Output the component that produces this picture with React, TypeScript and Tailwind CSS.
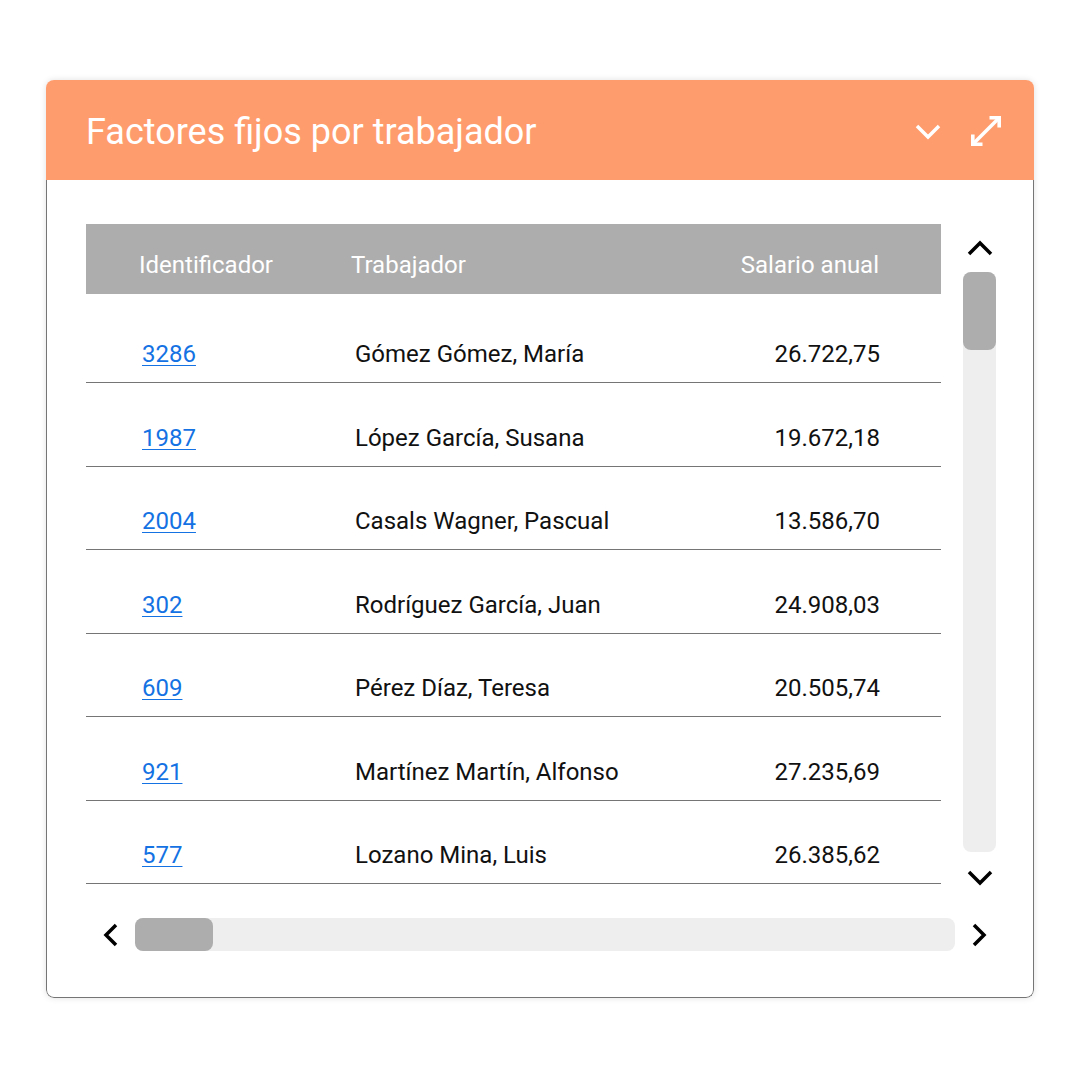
import React from "react";

const rows = [
  { id: "3286", name: "Gómez Gómez, María", salary: "26.722,75" },
  { id: "1987", name: "López García, Susana", salary: "19.672,18" },
  { id: "2004", name: "Casals Wagner, Pascual", salary: "13.586,70" },
  { id: "302", name: "Rodríguez García, Juan", salary: "24.908,03" },
  { id: "609", name: "Pérez Díaz, Teresa", salary: "20.505,74" },
  { id: "921", name: "Martínez Martín, Alfonso", salary: "27.235,69" },
  { id: "577", name: "Lozano Mina, Luis", salary: "26.385,62" },
];

function Chevron({ dir, color = "#000" }: { dir: "up" | "down" | "left" | "right"; color?: string }) {
  const pts: Record<string, string> = {
    up: "2,13 13,2 24,13",
    down: "2,2 13,13 24,2",
    left: "12,2 2,12 12,22",
    right: "2,2 12,12 2,22",
  };
  const horiz = dir === "left" || dir === "right";
  return (
    <svg
      width={horiz ? 14 : 26}
      height={horiz ? 24 : 15}
      viewBox={horiz ? "0 0 14 24" : "0 0 26 15"}
      fill="none"
      stroke={color}
      strokeWidth={3.5}
      overflow="visible"
    >
      <polyline points={pts[dir]} />
    </svg>
  );
}

function Expand() {
  return (
    <svg width="34" height="34" viewBox="0 0 34 34" fill="none" stroke="#fff" strokeWidth="3.6" strokeLinejoin="miter">
      <polyline points="20.5 3.8 30.2 3.8 30.2 13.5" />
      <polyline points="13.5 30.2 3.8 30.2 3.8 20.5" />
      <line x1="30" y1="4" x2="4" y2="30" />
    </svg>
  );
}

export default function App() {
  return (
    <div className="w-full h-[1080px] bg-white pt-[80px] pl-[46px]" style={{ fontFamily: "Roboto, 'Noto Sans', sans-serif" }}>
      <div className="w-[988px] h-[918px] rounded-[8px] overflow-hidden shadow-[0_0_6px_rgba(0,0,0,0.12)] flex flex-col">
        <div className="h-[100px] bg-[#ff9c6e] flex items-center pl-[40px] pr-[31px]">
          <div className="text-white text-[36px] flex-1 leading-none pt-[3px]">Factores fijos por trabajador</div>
          <div className="flex items-center gap-[28px] pt-[2px]">
            <Chevron dir="down" color="#fff" />
            <Expand />
          </div>
        </div>
        <div className="flex-1 border-x border-b border-[#757575] rounded-b-[8px] pl-[39px] pt-[44px] flex flex-col">
          <div className="flex h-[660px] items-start">
            <div className="w-[855px] flex flex-col">
              <div className="h-[70px] bg-[#adadad] flex items-end pb-[15px] text-white text-[24px] leading-[28px]">
                <div className="w-[265px] pl-[53px]">Identificador</div>
                <div className="flex-1">Trabajador</div>
                <div className="pr-[62px]">Salario anual</div>
              </div>
              <div className="h-[5.5px]" />
              {rows.map((r) => (
                <div key={r.id} className="h-[83.5px] border-b border-[#757575] flex items-end pb-[14px] text-[24px] leading-[28px] text-[#111]">
                  <div className="w-[269px] pl-[56px]">
                    <span className="text-[#1472e3] underline underline-offset-[3px] decoration-[1px]">{r.id}</span>
                  </div>
                  <div className="flex-1">{r.name}</div>
                  <div className="pr-[61px]">{r.salary}</div>
                </div>
              ))}
            </div>
            <div className="ml-[22px] w-[33px] flex flex-col items-center">
              <div className="h-[48px] flex items-center justify-center">
                <Chevron dir="up" />
              </div>
              <div className="w-[33px] h-[580px] bg-[#eeeeee] rounded-[8px] flex flex-col">
                <div className="h-[78px] bg-[#adadad] rounded-[8px]" />
              </div>
              <div className="h-[50px] flex items-center justify-center">
                <Chevron dir="down" />
              </div>
            </div>
          </div>
          <div className="mt-[34px] flex items-center h-[33px]">
            <div className="w-[49px] flex justify-center">
              <Chevron dir="left" />
            </div>
            <div className="w-[820px] h-[33px] bg-[#eeeeee] rounded-[8px] flex">
              <div className="w-[78px] h-full bg-[#adadad] rounded-[8px]" />
            </div>
            <div className="w-[48px] flex justify-center">
              <Chevron dir="right" />
            </div>
          </div>
        </div>
      </div>
    </div>
  );
}
